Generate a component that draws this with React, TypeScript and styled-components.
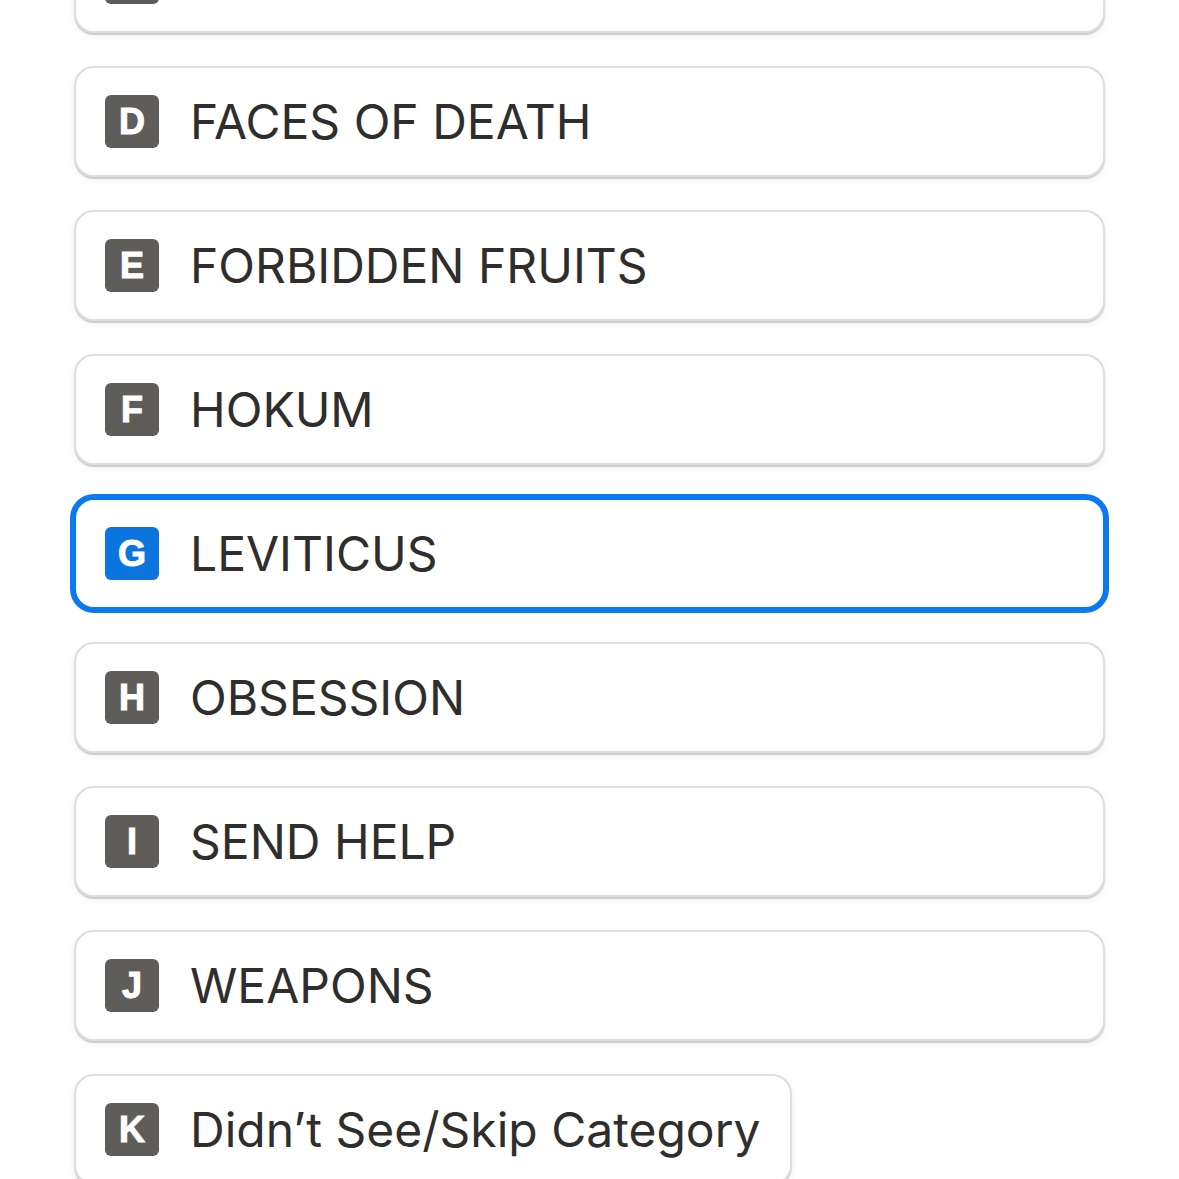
import styled, { createGlobalStyle } from "styled-components";

const GlobalStyle = createGlobalStyle`
  html, body {
    margin: 0;
    padding: 0;
    background: #ffffff;
    overflow: hidden;
  }
  body {
    font-family: Inter, "Noto Sans", sans-serif;
  }
`;

const Page = styled.div`
  height: 1179px;
  overflow: hidden;
  padding: 0 74px;
`;

const List = styled.div`
  display: flex;
  flex-direction: column;
  align-items: flex-start;
  gap: 33px;
  margin-top: -78px;
`;

const Choice = styled.div<{ $selected?: boolean; $fit?: boolean }>`
  box-sizing: border-box;
  display: flex;
  align-items: center;
  gap: 31px;
  height: 111px;
  width: ${(p) => (p.$fit ? "auto" : "100%")};
  padding: 0 30px 0 29px;
  background: #ffffff;
  border-radius: 20px;
  border: 2px solid ${(p) => (p.$selected ? "#0b79f0" : "#dedede")};
  box-shadow: ${(p) =>
    p.$selected
      ? "0 0 0 4px #0b79f0"
      : "0 2px 1px rgba(0, 0, 0, 0.16), 0 3px 8px rgba(0, 0, 0, 0.06)"};
`;

const Key = styled.span<{ $selected?: boolean }>`
  flex: none;
  display: flex;
  align-items: center;
  justify-content: center;
  width: 54px;
  height: 53px;
  border-radius: 6px;
  background: ${(p) => (p.$selected ? "#0b74de" : "#5e5d5a")};
  color: #ffffff;
  font-family: "Liberation Sans", Arial, sans-serif;
  font-weight: 700;
  font-size: 36px;
  line-height: 1;
  -webkit-text-stroke: 1px #ffffff;
`;

const Label = styled.span`
  font-family: Inter, "Noto Sans", sans-serif;
  font-size: 48px;
  font-weight: 400;
  color: #2f2e2c;
  white-space: nowrap;
`;

const options = [
  { key: "C", label: "" },
  { key: "D", label: "FACES OF DEATH" },
  { key: "E", label: "FORBIDDEN FRUITS" },
  { key: "F", label: "HOKUM" },
  { key: "G", label: "LEVITICUS", selected: true },
  { key: "H", label: "OBSESSION" },
  { key: "I", label: "SEND HELP" },
  { key: "J", label: "WEAPONS" },
  { key: "K", label: "Didn’t See/Skip Category", fit: true },
];

export default function App() {
  return (
    <Page>
      <GlobalStyle />
      <List>
        {options.map((o) => (
          <Choice key={o.key} $selected={o.selected} $fit={o.fit}>
            <Key $selected={o.selected}>{o.key}</Key>
            <Label>{o.label}</Label>
          </Choice>
        ))}
      </List>
    </Page>
  );
}
